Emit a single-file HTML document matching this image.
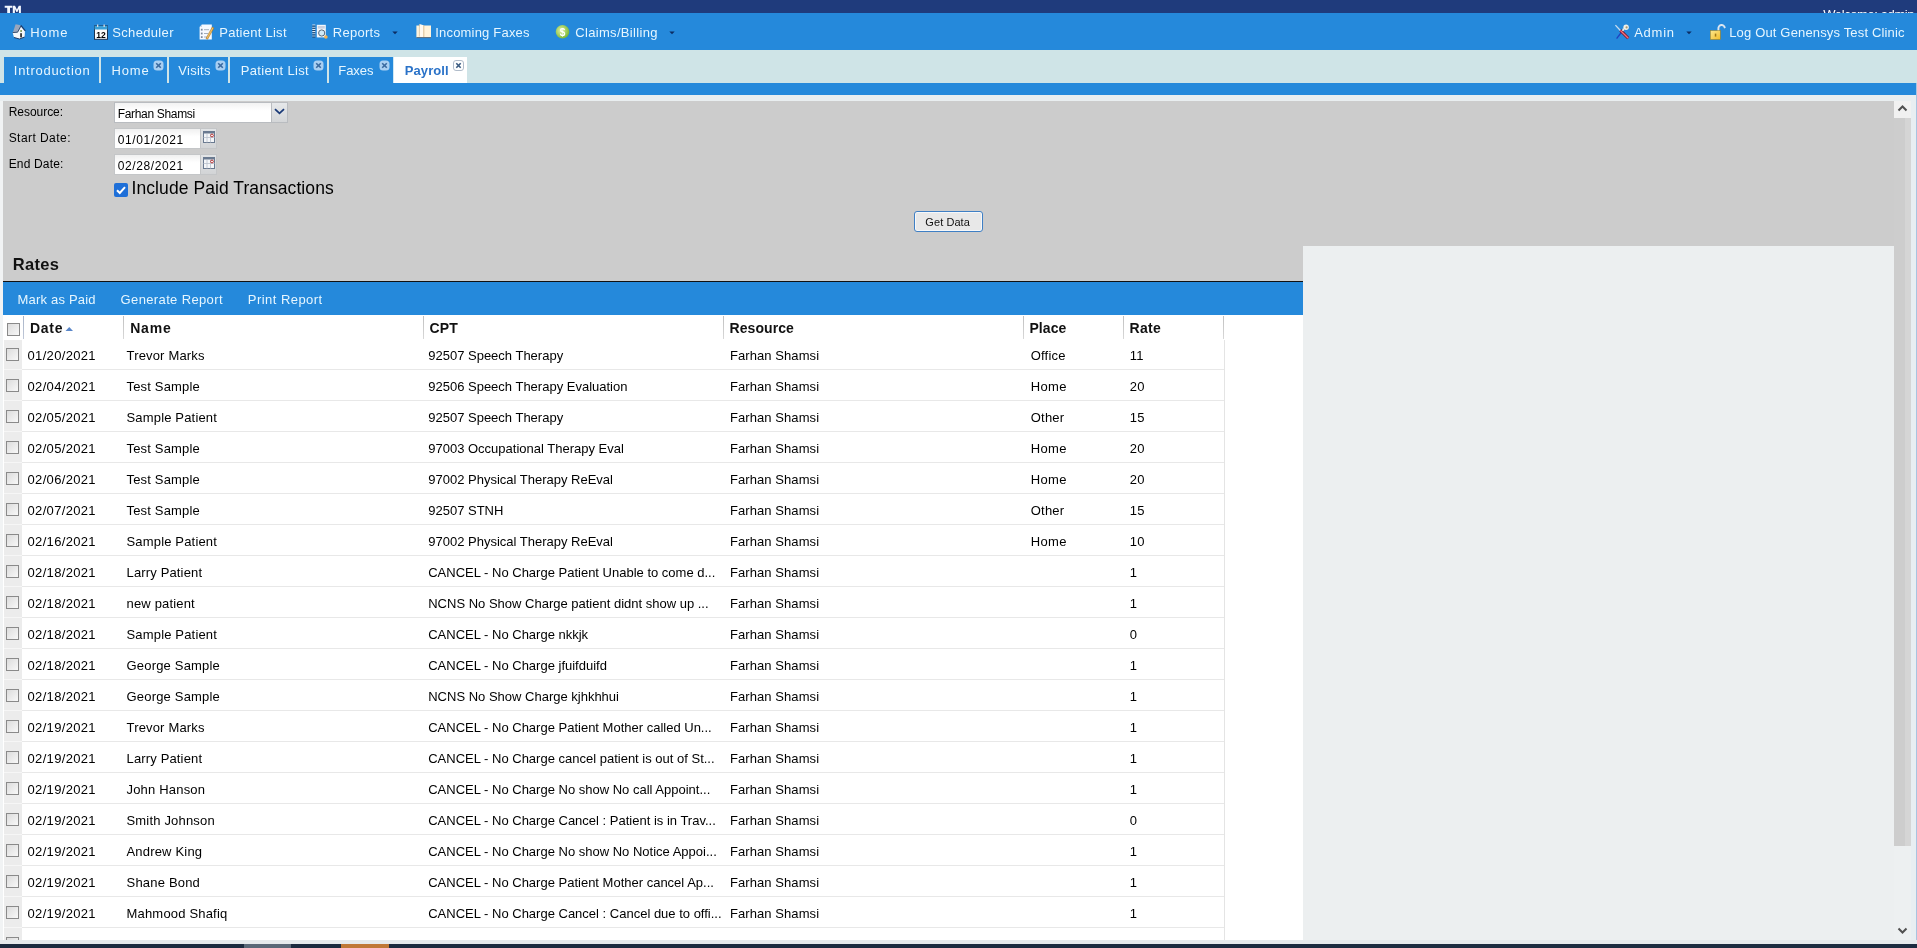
<!DOCTYPE html>
<html><head><meta charset="utf-8"><style>
html,body{margin:0;padding:0;width:1917px;height:948px;overflow:hidden;background:#eceff0;font-family:"Liberation Sans", sans-serif;}
.t{position:absolute;white-space:nowrap;}
.r{position:absolute;}
</style></head><body><div id="w" style="position:absolute;left:0;top:0;width:1917px;height:948px;will-change:transform;overflow:hidden">
<div class="r" style="left:0px;top:0px;width:1917px;height:13px;background:#1f3b7c"></div>
<svg class="r" style="left:0;top:0" width="24" height="13"><path d="M4.7 5.7 H12.3 V7.8 H10 V13 H7.2 V7.8 H4.7Z M12.8 5.7 H15 L16.9 9.5 L18.8 5.7 H20.9 V13 H18.9 V9 L17.4 12 H16.4 L14.9 9 V13 H12.8Z" fill="#f4f8ff"/></svg>
<div class="t" style="left:1823.22px;top:7.50px;font-size:13px;line-height:13px;font-weight:400;color:#fff;letter-spacing:-0.406px;">Welcome: admin</div>
<div class="r" style="left:0px;top:13px;width:1917px;height:37px;background:#2589db"></div>
<div class="r" style="left:0px;top:50px;width:1917px;height:33px;background:#cfe4e7"></div>
<div class="r" style="left:0px;top:83px;width:1917px;height:12px;background:#2589db"></div>
<div class="r" style="left:0px;top:95px;width:1917px;height:6px;background:#e9eef0"></div>
<div class="r" style="left:0px;top:101px;width:1917px;height:842px;background:#eceff0"></div>
<div class="r" style="left:0px;top:101px;width:3px;height:842px;background:#f1f3f4"></div>
<div class="r" style="left:3px;top:101px;width:1891px;height:145px;background:#cccccc"></div>
<div class="r" style="left:3px;top:246px;width:1300px;height:35px;background:#cccccc"></div>
<div class="r" style="left:3px;top:281px;width:1300px;height:1px;background:#111"></div>
<div class="r" style="left:3px;top:282px;width:1300px;height:33px;background:#2589db"></div>
<div class="r" style="left:3px;top:315px;width:1300px;height:625px;background:#fff"></div>
<div class="t" style="left:30.22px;top:26.00px;font-size:13px;line-height:13px;font-weight:400;color:#e6f6ff;letter-spacing:0.871px;">Home</div>
<div class="t" style="left:112.22px;top:26.00px;font-size:13px;line-height:13px;font-weight:400;color:#e6f6ff;letter-spacing:0.344px;">Scheduler</div>
<div class="t" style="left:219.22px;top:26.00px;font-size:13px;line-height:13px;font-weight:400;color:#e6f6ff;letter-spacing:0.270px;">Patient List</div>
<div class="t" style="left:332.72px;top:26.00px;font-size:13px;line-height:13px;font-weight:400;color:#e6f6ff;letter-spacing:0.295px;">Reports</div>
<div class="t" style="left:435.22px;top:26.00px;font-size:13px;line-height:13px;font-weight:400;color:#e6f6ff;letter-spacing:0.195px;">Incoming Faxes</div>
<div class="t" style="left:575.22px;top:26.00px;font-size:13px;line-height:13px;font-weight:400;color:#e6f6ff;letter-spacing:0.328px;">Claims/Billing</div>
<div class="t" style="left:1634.22px;top:26.00px;font-size:13px;line-height:13px;font-weight:400;color:#e6f6ff;letter-spacing:0.735px;">Admin</div>
<div class="t" style="left:1729.22px;top:26.00px;font-size:13px;line-height:13px;font-weight:400;color:#e6f6ff;letter-spacing:0.159px;">Log Out Genensys Test Clinic</div>
<svg class="r" style="left:390.7px;top:29.5px" width="8" height="6"><path d="M1.3 1.5 L6.7 1.5 L4 4.3Z" fill="#0c2c62"/></svg>
<svg class="r" style="left:667.6px;top:29.5px" width="8" height="6"><path d="M1.3 1.5 L6.7 1.5 L4 4.3Z" fill="#0c2c62"/></svg>
<svg class="r" style="left:1684.7px;top:29.5px" width="8" height="6"><path d="M1.3 1.5 L6.7 1.5 L4 4.3Z" fill="#0c2c62"/></svg>
<svg class="r" style="left:0px;top:0px" width="40" height="45" viewBox="0 0 40 45"><path d="M15.6 24.3 L20.8 25.3 L17.6 32.4 L12.8 32.8Z" fill="#9aa6bc"/><path d="M12.6 32.6 L17.6 32.2 L21 26 L25 30.6 L24.6 37 L19.5 39 L14 37.5Z" fill="#f6f8fa"/><path d="M20.8 25.3 L25.3 30.8" stroke="#163a6e" stroke-width="1.3"/><path d="M12.6 32.6 L17.6 32.2 L21 26" stroke="#2a3f60" stroke-width="0.9" fill="none"/><path d="M14 37.5 L19.5 39 L24.6 37" stroke="#1d3a66" stroke-width="1" fill="none"/><rect x="20.2" y="33.2" width="1.7" height="4.2" fill="#2a2a2a"/><circle cx="21.1" cy="31" r="0.9" fill="#6e8a3a"/></svg>
<svg class="r" style="left:94px;top:24px" width="14" height="16" viewBox="0 0 14 16"><rect x="0.5" y="2" width="13" height="13.3" fill="#fafafa" stroke="#1b3350" stroke-width="1"/><rect x="0.5" y="2" width="13" height="3.5" fill="#3aa0d8"/><rect x="3" y="0.5" width="1.3" height="2.5" fill="#ddd"/><rect x="9.5" y="0.5" width="1.3" height="2.5" fill="#ddd"/><text x="7" y="13.6" font-family="Liberation Sans" font-weight="700" font-size="8.5" text-anchor="middle" fill="#000">12</text></svg>
<svg class="r" style="left:199px;top:24px" width="16" height="16" viewBox="0 0 16 16"><path d="M3 0.4 L12.8 0.4 L12.8 15.5 L0.6 15.5 L0.6 3Z" fill="#f6faff"/><path d="M0.6 3 L3 0.4 L3 3Z" fill="#c8d4e4"/><rect x="1.9" y="4.8" width="1.7" height="1.8" fill="#7a889c"/><rect x="1.9" y="8.6" width="1.7" height="1.8" fill="#7a889c"/><rect x="1.9" y="12.2" width="1.7" height="1.8" fill="#7a889c"/><path d="M5 5.7h5M5 9.5h4M5 13h3" stroke="#9aa6b6" stroke-width="0.9"/><path d="M13.3 3 L14.9 4 L8.6 15.2 L7 14.4Z" fill="#f2c060" stroke="#a8701c" stroke-width="0.6"/></svg>
<svg class="r" style="left:311px;top:24px" width="17" height="16" viewBox="0 0 17 16"><path d="M1.3 1h3M1.3 3.2h3M1.3 5.4h3M1.3 7.6h3M1.3 9.8h3M1.3 12h3" stroke="#dfe8f0" stroke-width="1.1"/><path d="M1.3 2.1h3M1.3 4.3h3M1.3 6.5h3M1.3 8.7h3M1.3 10.9h3M1.3 13.1h3" stroke="#1e3a60" stroke-width="0.9"/><rect x="5.8" y="0.8" width="9" height="12.6" fill="#f4f8fc"/><rect x="6.8" y="2" width="7" height="2.6" fill="#c8d0e0"/><circle cx="10.7" cy="9" r="3.1" fill="#cfeaf8" stroke="#5a6878" stroke-width="1"/><circle cx="14.9" cy="13" r="1.8" fill="#f6b450"/></svg>
<svg class="r" style="left:416px;top:24px" width="16" height="15" viewBox="0 0 16 15"><rect x="0.4" y="1.5" width="14.6" height="12" fill="#fff4dc"/><path d="M3.5 0 L7.6 1.2 L7.6 13.5 L3.5 12.5Z" fill="#fffaf0"/><path d="M7.8 1.2 V13.5" stroke="#d0b080" stroke-width="0.8"/><path d="M3.4 0.2 V12.5" stroke="#c8b088" stroke-width="0.6"/><path d="M0.4 13.6 H15" stroke="#5a6a7a" stroke-width="1"/></svg>
<svg class="r" style="left:555px;top:24px" width="15" height="15" viewBox="0 0 15 15"><defs><radialGradient id="g1" cx="0.4" cy="0.4" r="0.7"><stop offset="0" stop-color="#e4f4a0"/><stop offset="1" stop-color="#6aae2a"/></radialGradient></defs><circle cx="7.5" cy="7.8" r="6.8" fill="url(#g1)"/><text x="7.5" y="11.5" font-family="Liberation Sans" font-weight="700" font-size="10" text-anchor="middle" fill="#fff">$</text></svg>
<svg class="r" style="left:1608px;top:20px" width="26" height="22" viewBox="0 0 26 22"><path d="M15 10.2 L8.6 18.6" stroke="#2040c0" stroke-width="1.4"/><path d="M7.4 5.1 L12.6 10.7" stroke="#c8dcee" stroke-width="1.3"/><path d="M12.4 10.4 L20.3 18.2" stroke="#7a1020" stroke-width="3"/><path d="M12.4 10.4 L20.3 18.2" stroke="#f07080" stroke-width="1.4"/><circle cx="18.1" cy="7.2" r="2.7" fill="#f2f0e8"/><circle cx="18.6" cy="7.4" r="1.1" fill="#a89870"/><path d="M15.6 8.4 L14.8 11" stroke="#f2f0e8" stroke-width="1.6"/></svg>
<svg class="r" style="left:1704px;top:20px" width="26" height="22" viewBox="0 0 26 22"><path d="M14.4 11 V8.6 A3.2 3.2 0 0 1 20.8 7.8 L21 8.2" fill="none" stroke="#dde6f0" stroke-width="1.9"/><defs><linearGradient id="lg" x1="0" y1="0" x2="1" y2="1"><stop offset="0" stop-color="#fbe890"/><stop offset="1" stop-color="#f2bc28"/></linearGradient></defs><rect x="6.3" y="10.6" width="10" height="8.9" fill="url(#lg)" stroke="#a07a10" stroke-width="0.5"/><rect x="10.8" y="13.6" width="1.5" height="3" fill="#a07818"/></svg>
<div class="r" style="left:4px;top:57px;width:95px;height:26px;background:#2589db"></div>
<div class="r" style="left:101px;top:57px;width:66px;height:26px;background:#2589db"></div>
<div class="r" style="left:169px;top:57px;width:59px;height:26px;background:#2589db"></div>
<div class="r" style="left:230px;top:57px;width:97px;height:26px;background:#2589db"></div>
<div class="r" style="left:329px;top:57px;width:64px;height:26px;background:#2589db"></div>
<div class="r" style="left:393px;top:57px;width:74px;height:26px;background:#fff;border-left:1px solid #cfe8f4;box-sizing:border-box"></div>
<div class="t" style="left:13.82px;top:64.00px;font-size:13px;line-height:13px;font-weight:400;color:#e6f6ff;letter-spacing:0.724px;">Introduction</div>
<div class="t" style="left:111.42px;top:64.00px;font-size:13px;line-height:13px;font-weight:400;color:#e6f6ff;letter-spacing:0.871px;">Home</div>
<div class="t" style="left:178.22px;top:64.00px;font-size:13px;line-height:13px;font-weight:400;color:#e6f6ff;letter-spacing:0.294px;">Visits</div>
<div class="t" style="left:240.82px;top:64.00px;font-size:13px;line-height:13px;font-weight:400;color:#e6f6ff;letter-spacing:0.316px;">Patient List</div>
<div class="t" style="left:338.22px;top:64.00px;font-size:13px;line-height:13px;font-weight:400;color:#e6f6ff;letter-spacing:-0.027px;">Faxes</div>
<div class="t" style="left:404.82px;top:64.00px;font-size:13px;line-height:13px;font-weight:700;color:#2a72c8;letter-spacing:0.073px;">Payroll</div>
<svg class="r" style="left:153px;top:60px" width="11" height="11" viewBox="0 0 11 11"><rect x="0.5" y="0.5" width="10" height="10" rx="3.5" fill="#a9cff2"/><path d="M3.2 3.2 L7.8 7.8 M7.8 3.2 L3.2 7.8" stroke="#3a6aa0" stroke-width="1.6"/></svg>
<svg class="r" style="left:215px;top:60px" width="11" height="11" viewBox="0 0 11 11"><rect x="0.5" y="0.5" width="10" height="10" rx="3.5" fill="#a9cff2"/><path d="M3.2 3.2 L7.8 7.8 M7.8 3.2 L3.2 7.8" stroke="#3a6aa0" stroke-width="1.6"/></svg>
<svg class="r" style="left:313px;top:60px" width="11" height="11" viewBox="0 0 11 11"><rect x="0.5" y="0.5" width="10" height="10" rx="3.5" fill="#a9cff2"/><path d="M3.2 3.2 L7.8 7.8 M7.8 3.2 L3.2 7.8" stroke="#3a6aa0" stroke-width="1.6"/></svg>
<svg class="r" style="left:379px;top:60px" width="11" height="11" viewBox="0 0 11 11"><rect x="0.5" y="0.5" width="10" height="10" rx="3.5" fill="#a9cff2"/><path d="M3.2 3.2 L7.8 7.8 M7.8 3.2 L3.2 7.8" stroke="#3a6aa0" stroke-width="1.6"/></svg>
<svg class="r" style="left:453px;top:60px" width="11" height="11" viewBox="0 0 11 11"><rect x="0.5" y="0.5" width="10" height="10" rx="2.5" fill="#fff" stroke="#a8b4c4" stroke-width="0.9"/><path d="M3.3 3.3 L7.7 7.7 M7.7 3.3 L3.3 7.7" stroke="#3a5a80" stroke-width="1.6"/></svg>
<div class="t" style="left:8.68px;top:105.84px;font-size:12px;line-height:12px;font-weight:400;color:#000;letter-spacing:-0.038px;">Resource:</div>
<div class="t" style="left:8.68px;top:131.84px;font-size:12px;line-height:12px;font-weight:400;color:#000;letter-spacing:0.444px;">Start Date:</div>
<div class="t" style="left:8.68px;top:157.84px;font-size:12px;line-height:12px;font-weight:400;color:#000;letter-spacing:0.166px;">End Date:</div>
<div class="r" style="left:114px;top:102px;width:174px;height:21px;background:#fff;border:1px solid #b9bcc0;box-sizing:border-box;background:linear-gradient(#f2f2f2,#fff 40%)"></div>
<div class="r" style="left:271px;top:102px;width:17px;height:21px;background:linear-gradient(#e6e8ea,#d4d6d8);border:1px solid #b9bcc0;box-sizing:border-box"></div>
<svg class="r" style="left:274px;top:108px" width="11" height="7"><path d="M1 1.2 L5.5 5.3 L10 1.2" stroke="#1a3a78" stroke-width="1.8" fill="none"/></svg>
<div class="t" style="left:117.68px;top:108.14px;font-size:12px;line-height:12px;font-weight:400;color:#000;letter-spacing:-0.323px;">Farhan Shamsi</div>
<div class="r" style="left:114px;top:128px;width:87px;height:21px;background:linear-gradient(#f0f0f0,#fff 40%);border:1px solid #c4c6c8;box-sizing:border-box"></div>
<div class="r" style="left:200px;top:128px;width:17px;height:21px;background:linear-gradient(#e2e4e6,#d2d4d6);border:1px solid #c4c6c8;box-sizing:border-box"></div>
<svg class="r" style="left:203px;top:131px" width="12" height="12" viewBox="0 0 12 12"><rect x="0.5" y="0.5" width="11" height="11" fill="#f4f6f8" stroke="#6a7a90" stroke-width="1"/><rect x="0.5" y="0.5" width="11" height="2" fill="#6a7a90"/><path d="M4 3v8.5M7.5 3v8.5M0.5 6.5h11" stroke="#b8c0cc" stroke-width="0.8"/><circle cx="9" cy="4.5" r="1.4" fill="#fff" stroke="#b02020" stroke-width="0.9"/></svg>
<div class="t" style="left:117.68px;top:133.84px;font-size:12px;line-height:12px;font-weight:400;color:#000;letter-spacing:0.615px;">01/01/2021</div>
<div class="r" style="left:114px;top:154px;width:87px;height:21px;background:linear-gradient(#f0f0f0,#fff 40%);border:1px solid #c4c6c8;box-sizing:border-box"></div>
<div class="r" style="left:200px;top:154px;width:17px;height:21px;background:linear-gradient(#e2e4e6,#d2d4d6);border:1px solid #c4c6c8;box-sizing:border-box"></div>
<svg class="r" style="left:203px;top:157px" width="12" height="12" viewBox="0 0 12 12"><rect x="0.5" y="0.5" width="11" height="11" fill="#f4f6f8" stroke="#6a7a90" stroke-width="1"/><rect x="0.5" y="0.5" width="11" height="2" fill="#6a7a90"/><path d="M4 3v8.5M7.5 3v8.5M0.5 6.5h11" stroke="#b8c0cc" stroke-width="0.8"/><circle cx="9" cy="4.5" r="1.4" fill="#fff" stroke="#b02020" stroke-width="0.9"/></svg>
<div class="t" style="left:117.68px;top:159.84px;font-size:12px;line-height:12px;font-weight:400;color:#000;letter-spacing:0.615px;">02/28/2021</div>
<div class="r" style="left:114px;top:183px;width:14px;height:14px;border-radius:2px;background:#1e6fd8"></div>
<svg class="r" style="left:114px;top:183px" width="14" height="14"><path d="M3 7.2 L5.8 10 L11 4.2" stroke="#fff" stroke-width="2" fill="none"/></svg>
<div class="t" style="left:131.55px;top:180.29px;font-size:17.5px;line-height:17.5px;font-weight:400;color:#000;letter-spacing:0.073px;">Include Paid Transactions</div>
<div class="r" style="left:914px;top:211px;width:69px;height:21px;background:#e8e8e8;border:1px solid #3f7fc4;border-radius:3px;box-sizing:border-box;box-shadow:inset 0 0 0 1px #f6f8fa"></div>
<div class="t" style="left:925.34px;top:216.89px;font-size:11px;line-height:11px;font-weight:400;color:#111;letter-spacing:0.067px;">Get Data</div>
<div class="t" style="left:12.81px;top:256.03px;font-size:16.5px;line-height:16.5px;font-weight:700;color:#111;letter-spacing:0.299px;">Rates</div>
<div class="t" style="left:17.52px;top:292.70px;font-size:13px;line-height:13px;font-weight:400;color:#e6f6ff;letter-spacing:0.193px;">Mark as Paid</div>
<div class="t" style="left:120.62px;top:292.70px;font-size:13px;line-height:13px;font-weight:400;color:#e6f6ff;letter-spacing:0.361px;">Generate Report</div>
<div class="t" style="left:247.82px;top:292.70px;font-size:13px;line-height:13px;font-weight:400;color:#e6f6ff;letter-spacing:0.457px;">Print Report</div>
<div class="r" style="left:3px;top:315px;width:1221px;height:25px;background:#fff"></div>
<div class="r" style="left:23px;top:316px;width:1px;height:23px;background:linear-gradient(#a8b4c8,#c0c8d8)"></div>
<div class="r" style="left:123px;top:316px;width:1px;height:23px;background:linear-gradient(#c0c0c0,#d8d8d8)"></div>
<div class="r" style="left:423px;top:316px;width:1px;height:23px;background:linear-gradient(#c0c0c0,#d8d8d8)"></div>
<div class="r" style="left:723px;top:316px;width:1px;height:23px;background:linear-gradient(#c0c0c0,#d8d8d8)"></div>
<div class="r" style="left:1023px;top:316px;width:1px;height:23px;background:linear-gradient(#c0c0c0,#d8d8d8)"></div>
<div class="r" style="left:1123px;top:316px;width:1px;height:23px;background:linear-gradient(#c0c0c0,#d8d8d8)"></div>
<div class="r" style="left:1223px;top:316px;width:1px;height:23px;background:linear-gradient(#c0c0c0,#d8d8d8)"></div>
<div class="r" style="left:7px;top:323px;width:13px;height:13px;border:1px solid #8a8a8a;box-sizing:border-box;background:linear-gradient(135deg,#dcdcdc,#f8f8f8)"></div>
<div class="t" style="left:30.06px;top:320.95px;font-size:14px;line-height:14px;font-weight:700;color:#111;letter-spacing:0.714px;">Date</div>
<div class="t" style="left:130.16px;top:320.95px;font-size:14px;line-height:14px;font-weight:700;color:#111;letter-spacing:0.853px;">Name</div>
<div class="t" style="left:429.46px;top:320.95px;font-size:14px;line-height:14px;font-weight:700;color:#111;letter-spacing:0.200px;">CPT</div>
<div class="t" style="left:729.46px;top:320.95px;font-size:14px;line-height:14px;font-weight:700;color:#111;letter-spacing:0.084px;">Resource</div>
<div class="t" style="left:1029.46px;top:320.95px;font-size:14px;line-height:14px;font-weight:700;color:#111;letter-spacing:0.077px;">Place</div>
<div class="t" style="left:1129.46px;top:320.95px;font-size:14px;line-height:14px;font-weight:700;color:#111;letter-spacing:0.347px;">Rate</div>
<svg class="r" style="left:65px;top:326px" width="9" height="6"><path d="M0.5 5 L4.25 1 L8 5Z" fill="#5a86c8"/></svg>
<div class="r" style="left:4px;top:340px;width:18px;height:600px;background:#ececec"></div>
<div class="r" style="left:4px;top:369px;width:18px;height:1px;background:#f6f6f6"></div>
<div class="r" style="left:6px;top:348px;width:13px;height:13px;border:1px solid #8a8a8a;box-sizing:border-box;background:linear-gradient(135deg,#dcdcdc,#f8f8f8)"></div>
<div class="t" style="left:27.52px;top:348.60px;font-size:13px;line-height:13px;font-weight:400;color:#000;letter-spacing:0.336px;">01/20/2021</div>
<div class="t" style="left:126.52px;top:348.60px;font-size:13px;line-height:13px;font-weight:400;color:#000;letter-spacing:0.170px;">Trevor Marks</div>
<div class="t" style="left:428.22px;top:348.60px;font-size:13px;line-height:13px;font-weight:400;color:#000;">92507 Speech Therapy</div>
<div class="t" style="left:730.02px;top:348.60px;font-size:13px;line-height:13px;font-weight:400;color:#000;letter-spacing:0.072px;">Farhan Shamsi</div>
<div class="t" style="left:1030.72px;top:348.60px;font-size:13px;line-height:13px;font-weight:400;color:#000;letter-spacing:0.195px;">Office</div>
<div class="t" style="left:1129.72px;top:348.60px;font-size:13px;line-height:13px;font-weight:400;color:#000;letter-spacing:0.366px;">11</div>
<div class="r" style="left:22px;top:369px;width:1202px;height:1px;background:#e8e8e8"></div>
<div class="r" style="left:4px;top:400px;width:18px;height:1px;background:#f6f6f6"></div>
<div class="r" style="left:6px;top:379px;width:13px;height:13px;border:1px solid #8a8a8a;box-sizing:border-box;background:linear-gradient(135deg,#dcdcdc,#f8f8f8)"></div>
<div class="t" style="left:27.52px;top:379.60px;font-size:13px;line-height:13px;font-weight:400;color:#000;letter-spacing:0.336px;">02/04/2021</div>
<div class="t" style="left:126.52px;top:379.60px;font-size:13px;line-height:13px;font-weight:400;color:#000;letter-spacing:0.176px;">Test Sample</div>
<div class="t" style="left:428.22px;top:379.60px;font-size:13px;line-height:13px;font-weight:400;color:#000;">92506 Speech Therapy Evaluation</div>
<div class="t" style="left:730.02px;top:379.60px;font-size:13px;line-height:13px;font-weight:400;color:#000;letter-spacing:0.072px;">Farhan Shamsi</div>
<div class="t" style="left:1030.72px;top:379.60px;font-size:13px;line-height:13px;font-weight:400;color:#000;letter-spacing:0.334px;">Home</div>
<div class="t" style="left:1129.72px;top:379.60px;font-size:13px;line-height:13px;font-weight:400;color:#000;letter-spacing:0.395px;">20</div>
<div class="r" style="left:22px;top:400px;width:1202px;height:1px;background:#e8e8e8"></div>
<div class="r" style="left:4px;top:431px;width:18px;height:1px;background:#f6f6f6"></div>
<div class="r" style="left:6px;top:410px;width:13px;height:13px;border:1px solid #8a8a8a;box-sizing:border-box;background:linear-gradient(135deg,#dcdcdc,#f8f8f8)"></div>
<div class="t" style="left:27.52px;top:410.60px;font-size:13px;line-height:13px;font-weight:400;color:#000;letter-spacing:0.336px;">02/05/2021</div>
<div class="t" style="left:126.52px;top:410.60px;font-size:13px;line-height:13px;font-weight:400;color:#000;letter-spacing:0.167px;">Sample Patient</div>
<div class="t" style="left:428.22px;top:410.60px;font-size:13px;line-height:13px;font-weight:400;color:#000;">92507 Speech Therapy</div>
<div class="t" style="left:730.02px;top:410.60px;font-size:13px;line-height:13px;font-weight:400;color:#000;letter-spacing:0.072px;">Farhan Shamsi</div>
<div class="t" style="left:1030.72px;top:410.60px;font-size:13px;line-height:13px;font-weight:400;color:#000;letter-spacing:0.234px;">Other</div>
<div class="t" style="left:1129.72px;top:410.60px;font-size:13px;line-height:13px;font-weight:400;color:#000;letter-spacing:0.395px;">15</div>
<div class="r" style="left:22px;top:431px;width:1202px;height:1px;background:#e8e8e8"></div>
<div class="r" style="left:4px;top:462px;width:18px;height:1px;background:#f6f6f6"></div>
<div class="r" style="left:6px;top:441px;width:13px;height:13px;border:1px solid #8a8a8a;box-sizing:border-box;background:linear-gradient(135deg,#dcdcdc,#f8f8f8)"></div>
<div class="t" style="left:27.52px;top:441.60px;font-size:13px;line-height:13px;font-weight:400;color:#000;letter-spacing:0.336px;">02/05/2021</div>
<div class="t" style="left:126.52px;top:441.60px;font-size:13px;line-height:13px;font-weight:400;color:#000;letter-spacing:0.176px;">Test Sample</div>
<div class="t" style="left:428.22px;top:441.60px;font-size:13px;line-height:13px;font-weight:400;color:#000;">97003 Occupational Therapy Eval</div>
<div class="t" style="left:730.02px;top:441.60px;font-size:13px;line-height:13px;font-weight:400;color:#000;letter-spacing:0.072px;">Farhan Shamsi</div>
<div class="t" style="left:1030.72px;top:441.60px;font-size:13px;line-height:13px;font-weight:400;color:#000;letter-spacing:0.334px;">Home</div>
<div class="t" style="left:1129.72px;top:441.60px;font-size:13px;line-height:13px;font-weight:400;color:#000;letter-spacing:0.395px;">20</div>
<div class="r" style="left:22px;top:462px;width:1202px;height:1px;background:#e8e8e8"></div>
<div class="r" style="left:4px;top:493px;width:18px;height:1px;background:#f6f6f6"></div>
<div class="r" style="left:6px;top:472px;width:13px;height:13px;border:1px solid #8a8a8a;box-sizing:border-box;background:linear-gradient(135deg,#dcdcdc,#f8f8f8)"></div>
<div class="t" style="left:27.52px;top:472.60px;font-size:13px;line-height:13px;font-weight:400;color:#000;letter-spacing:0.336px;">02/06/2021</div>
<div class="t" style="left:126.52px;top:472.60px;font-size:13px;line-height:13px;font-weight:400;color:#000;letter-spacing:0.176px;">Test Sample</div>
<div class="t" style="left:428.22px;top:472.60px;font-size:13px;line-height:13px;font-weight:400;color:#000;">97002 Physical Therapy ReEval</div>
<div class="t" style="left:730.02px;top:472.60px;font-size:13px;line-height:13px;font-weight:400;color:#000;letter-spacing:0.072px;">Farhan Shamsi</div>
<div class="t" style="left:1030.72px;top:472.60px;font-size:13px;line-height:13px;font-weight:400;color:#000;letter-spacing:0.334px;">Home</div>
<div class="t" style="left:1129.72px;top:472.60px;font-size:13px;line-height:13px;font-weight:400;color:#000;letter-spacing:0.395px;">20</div>
<div class="r" style="left:22px;top:493px;width:1202px;height:1px;background:#e8e8e8"></div>
<div class="r" style="left:4px;top:524px;width:18px;height:1px;background:#f6f6f6"></div>
<div class="r" style="left:6px;top:503px;width:13px;height:13px;border:1px solid #8a8a8a;box-sizing:border-box;background:linear-gradient(135deg,#dcdcdc,#f8f8f8)"></div>
<div class="t" style="left:27.52px;top:503.60px;font-size:13px;line-height:13px;font-weight:400;color:#000;letter-spacing:0.336px;">02/07/2021</div>
<div class="t" style="left:126.52px;top:503.60px;font-size:13px;line-height:13px;font-weight:400;color:#000;letter-spacing:0.176px;">Test Sample</div>
<div class="t" style="left:428.22px;top:503.60px;font-size:13px;line-height:13px;font-weight:400;color:#000;">92507 STNH</div>
<div class="t" style="left:730.02px;top:503.60px;font-size:13px;line-height:13px;font-weight:400;color:#000;letter-spacing:0.072px;">Farhan Shamsi</div>
<div class="t" style="left:1030.72px;top:503.60px;font-size:13px;line-height:13px;font-weight:400;color:#000;letter-spacing:0.234px;">Other</div>
<div class="t" style="left:1129.72px;top:503.60px;font-size:13px;line-height:13px;font-weight:400;color:#000;letter-spacing:0.395px;">15</div>
<div class="r" style="left:22px;top:524px;width:1202px;height:1px;background:#e8e8e8"></div>
<div class="r" style="left:4px;top:555px;width:18px;height:1px;background:#f6f6f6"></div>
<div class="r" style="left:6px;top:534px;width:13px;height:13px;border:1px solid #8a8a8a;box-sizing:border-box;background:linear-gradient(135deg,#dcdcdc,#f8f8f8)"></div>
<div class="t" style="left:27.52px;top:534.60px;font-size:13px;line-height:13px;font-weight:400;color:#000;letter-spacing:0.336px;">02/16/2021</div>
<div class="t" style="left:126.52px;top:534.60px;font-size:13px;line-height:13px;font-weight:400;color:#000;letter-spacing:0.167px;">Sample Patient</div>
<div class="t" style="left:428.22px;top:534.60px;font-size:13px;line-height:13px;font-weight:400;color:#000;">97002 Physical Therapy ReEval</div>
<div class="t" style="left:730.02px;top:534.60px;font-size:13px;line-height:13px;font-weight:400;color:#000;letter-spacing:0.072px;">Farhan Shamsi</div>
<div class="t" style="left:1030.72px;top:534.60px;font-size:13px;line-height:13px;font-weight:400;color:#000;letter-spacing:0.334px;">Home</div>
<div class="t" style="left:1129.72px;top:534.60px;font-size:13px;line-height:13px;font-weight:400;color:#000;letter-spacing:0.395px;">10</div>
<div class="r" style="left:22px;top:555px;width:1202px;height:1px;background:#e8e8e8"></div>
<div class="r" style="left:4px;top:586px;width:18px;height:1px;background:#f6f6f6"></div>
<div class="r" style="left:6px;top:565px;width:13px;height:13px;border:1px solid #8a8a8a;box-sizing:border-box;background:linear-gradient(135deg,#dcdcdc,#f8f8f8)"></div>
<div class="t" style="left:27.52px;top:565.60px;font-size:13px;line-height:13px;font-weight:400;color:#000;letter-spacing:0.336px;">02/18/2021</div>
<div class="t" style="left:126.52px;top:565.60px;font-size:13px;line-height:13px;font-weight:400;color:#000;letter-spacing:0.151px;">Larry Patient</div>
<div class="t" style="left:428.22px;top:565.60px;font-size:13px;line-height:13px;font-weight:400;color:#000;">CANCEL - No Charge Patient Unable to come d...</div>
<div class="t" style="left:730.02px;top:565.60px;font-size:13px;line-height:13px;font-weight:400;color:#000;letter-spacing:0.072px;">Farhan Shamsi</div>
<div class="t" style="left:1129.72px;top:565.60px;font-size:13px;line-height:13px;font-weight:400;color:#000;letter-spacing:0.178px;">1</div>
<div class="r" style="left:22px;top:586px;width:1202px;height:1px;background:#e8e8e8"></div>
<div class="r" style="left:4px;top:617px;width:18px;height:1px;background:#f6f6f6"></div>
<div class="r" style="left:6px;top:596px;width:13px;height:13px;border:1px solid #8a8a8a;box-sizing:border-box;background:linear-gradient(135deg,#dcdcdc,#f8f8f8)"></div>
<div class="t" style="left:27.52px;top:596.60px;font-size:13px;line-height:13px;font-weight:400;color:#000;letter-spacing:0.336px;">02/18/2021</div>
<div class="t" style="left:126.52px;top:596.60px;font-size:13px;line-height:13px;font-weight:400;color:#000;letter-spacing:0.163px;">new patient</div>
<div class="t" style="left:428.22px;top:596.60px;font-size:13px;line-height:13px;font-weight:400;color:#000;">NCNS No Show Charge patient didnt show up ...</div>
<div class="t" style="left:730.02px;top:596.60px;font-size:13px;line-height:13px;font-weight:400;color:#000;letter-spacing:0.072px;">Farhan Shamsi</div>
<div class="t" style="left:1129.72px;top:596.60px;font-size:13px;line-height:13px;font-weight:400;color:#000;letter-spacing:0.178px;">1</div>
<div class="r" style="left:22px;top:617px;width:1202px;height:1px;background:#e8e8e8"></div>
<div class="r" style="left:4px;top:648px;width:18px;height:1px;background:#f6f6f6"></div>
<div class="r" style="left:6px;top:627px;width:13px;height:13px;border:1px solid #8a8a8a;box-sizing:border-box;background:linear-gradient(135deg,#dcdcdc,#f8f8f8)"></div>
<div class="t" style="left:27.52px;top:627.60px;font-size:13px;line-height:13px;font-weight:400;color:#000;letter-spacing:0.336px;">02/18/2021</div>
<div class="t" style="left:126.52px;top:627.60px;font-size:13px;line-height:13px;font-weight:400;color:#000;letter-spacing:0.167px;">Sample Patient</div>
<div class="t" style="left:428.22px;top:627.60px;font-size:13px;line-height:13px;font-weight:400;color:#000;">CANCEL - No Charge nkkjk</div>
<div class="t" style="left:730.02px;top:627.60px;font-size:13px;line-height:13px;font-weight:400;color:#000;letter-spacing:0.072px;">Farhan Shamsi</div>
<div class="t" style="left:1129.72px;top:627.60px;font-size:13px;line-height:13px;font-weight:400;color:#000;letter-spacing:0.178px;">0</div>
<div class="r" style="left:22px;top:648px;width:1202px;height:1px;background:#e8e8e8"></div>
<div class="r" style="left:4px;top:679px;width:18px;height:1px;background:#f6f6f6"></div>
<div class="r" style="left:6px;top:658px;width:13px;height:13px;border:1px solid #8a8a8a;box-sizing:border-box;background:linear-gradient(135deg,#dcdcdc,#f8f8f8)"></div>
<div class="t" style="left:27.52px;top:658.60px;font-size:13px;line-height:13px;font-weight:400;color:#000;letter-spacing:0.336px;">02/18/2021</div>
<div class="t" style="left:126.52px;top:658.60px;font-size:13px;line-height:13px;font-weight:400;color:#000;letter-spacing:0.187px;">George Sample</div>
<div class="t" style="left:428.22px;top:658.60px;font-size:13px;line-height:13px;font-weight:400;color:#000;">CANCEL - No Charge jfuifduifd</div>
<div class="t" style="left:730.02px;top:658.60px;font-size:13px;line-height:13px;font-weight:400;color:#000;letter-spacing:0.072px;">Farhan Shamsi</div>
<div class="t" style="left:1129.72px;top:658.60px;font-size:13px;line-height:13px;font-weight:400;color:#000;letter-spacing:0.178px;">1</div>
<div class="r" style="left:22px;top:679px;width:1202px;height:1px;background:#e8e8e8"></div>
<div class="r" style="left:4px;top:710px;width:18px;height:1px;background:#f6f6f6"></div>
<div class="r" style="left:6px;top:689px;width:13px;height:13px;border:1px solid #8a8a8a;box-sizing:border-box;background:linear-gradient(135deg,#dcdcdc,#f8f8f8)"></div>
<div class="t" style="left:27.52px;top:689.60px;font-size:13px;line-height:13px;font-weight:400;color:#000;letter-spacing:0.336px;">02/18/2021</div>
<div class="t" style="left:126.52px;top:689.60px;font-size:13px;line-height:13px;font-weight:400;color:#000;letter-spacing:0.187px;">George Sample</div>
<div class="t" style="left:428.22px;top:689.60px;font-size:13px;line-height:13px;font-weight:400;color:#000;">NCNS No Show Charge kjhkhhui</div>
<div class="t" style="left:730.02px;top:689.60px;font-size:13px;line-height:13px;font-weight:400;color:#000;letter-spacing:0.072px;">Farhan Shamsi</div>
<div class="t" style="left:1129.72px;top:689.60px;font-size:13px;line-height:13px;font-weight:400;color:#000;letter-spacing:0.178px;">1</div>
<div class="r" style="left:22px;top:710px;width:1202px;height:1px;background:#e8e8e8"></div>
<div class="r" style="left:4px;top:741px;width:18px;height:1px;background:#f6f6f6"></div>
<div class="r" style="left:6px;top:720px;width:13px;height:13px;border:1px solid #8a8a8a;box-sizing:border-box;background:linear-gradient(135deg,#dcdcdc,#f8f8f8)"></div>
<div class="t" style="left:27.52px;top:720.60px;font-size:13px;line-height:13px;font-weight:400;color:#000;letter-spacing:0.336px;">02/19/2021</div>
<div class="t" style="left:126.52px;top:720.60px;font-size:13px;line-height:13px;font-weight:400;color:#000;letter-spacing:0.170px;">Trevor Marks</div>
<div class="t" style="left:428.22px;top:720.60px;font-size:13px;line-height:13px;font-weight:400;color:#000;">CANCEL - No Charge Patient Mother called Un...</div>
<div class="t" style="left:730.02px;top:720.60px;font-size:13px;line-height:13px;font-weight:400;color:#000;letter-spacing:0.072px;">Farhan Shamsi</div>
<div class="t" style="left:1129.72px;top:720.60px;font-size:13px;line-height:13px;font-weight:400;color:#000;letter-spacing:0.178px;">1</div>
<div class="r" style="left:22px;top:741px;width:1202px;height:1px;background:#e8e8e8"></div>
<div class="r" style="left:4px;top:772px;width:18px;height:1px;background:#f6f6f6"></div>
<div class="r" style="left:6px;top:751px;width:13px;height:13px;border:1px solid #8a8a8a;box-sizing:border-box;background:linear-gradient(135deg,#dcdcdc,#f8f8f8)"></div>
<div class="t" style="left:27.52px;top:751.60px;font-size:13px;line-height:13px;font-weight:400;color:#000;letter-spacing:0.336px;">02/19/2021</div>
<div class="t" style="left:126.52px;top:751.60px;font-size:13px;line-height:13px;font-weight:400;color:#000;letter-spacing:0.151px;">Larry Patient</div>
<div class="t" style="left:428.22px;top:751.60px;font-size:13px;line-height:13px;font-weight:400;color:#000;">CANCEL - No Charge cancel patient is out of St...</div>
<div class="t" style="left:730.02px;top:751.60px;font-size:13px;line-height:13px;font-weight:400;color:#000;letter-spacing:0.072px;">Farhan Shamsi</div>
<div class="t" style="left:1129.72px;top:751.60px;font-size:13px;line-height:13px;font-weight:400;color:#000;letter-spacing:0.178px;">1</div>
<div class="r" style="left:22px;top:772px;width:1202px;height:1px;background:#e8e8e8"></div>
<div class="r" style="left:4px;top:803px;width:18px;height:1px;background:#f6f6f6"></div>
<div class="r" style="left:6px;top:782px;width:13px;height:13px;border:1px solid #8a8a8a;box-sizing:border-box;background:linear-gradient(135deg,#dcdcdc,#f8f8f8)"></div>
<div class="t" style="left:27.52px;top:782.60px;font-size:13px;line-height:13px;font-weight:400;color:#000;letter-spacing:0.336px;">02/19/2021</div>
<div class="t" style="left:126.52px;top:782.60px;font-size:13px;line-height:13px;font-weight:400;color:#000;letter-spacing:0.188px;">John Hanson</div>
<div class="t" style="left:428.22px;top:782.60px;font-size:13px;line-height:13px;font-weight:400;color:#000;">CANCEL - No Charge No show No call Appoint...</div>
<div class="t" style="left:730.02px;top:782.60px;font-size:13px;line-height:13px;font-weight:400;color:#000;letter-spacing:0.072px;">Farhan Shamsi</div>
<div class="t" style="left:1129.72px;top:782.60px;font-size:13px;line-height:13px;font-weight:400;color:#000;letter-spacing:0.178px;">1</div>
<div class="r" style="left:22px;top:803px;width:1202px;height:1px;background:#e8e8e8"></div>
<div class="r" style="left:4px;top:834px;width:18px;height:1px;background:#f6f6f6"></div>
<div class="r" style="left:6px;top:813px;width:13px;height:13px;border:1px solid #8a8a8a;box-sizing:border-box;background:linear-gradient(135deg,#dcdcdc,#f8f8f8)"></div>
<div class="t" style="left:27.52px;top:813.60px;font-size:13px;line-height:13px;font-weight:400;color:#000;letter-spacing:0.336px;">02/19/2021</div>
<div class="t" style="left:126.52px;top:813.60px;font-size:13px;line-height:13px;font-weight:400;color:#000;letter-spacing:0.176px;">Smith Johnson</div>
<div class="t" style="left:428.22px;top:813.60px;font-size:13px;line-height:13px;font-weight:400;color:#000;">CANCEL - No Charge Cancel : Patient is in Trav...</div>
<div class="t" style="left:730.02px;top:813.60px;font-size:13px;line-height:13px;font-weight:400;color:#000;letter-spacing:0.072px;">Farhan Shamsi</div>
<div class="t" style="left:1129.72px;top:813.60px;font-size:13px;line-height:13px;font-weight:400;color:#000;letter-spacing:0.178px;">0</div>
<div class="r" style="left:22px;top:834px;width:1202px;height:1px;background:#e8e8e8"></div>
<div class="r" style="left:4px;top:865px;width:18px;height:1px;background:#f6f6f6"></div>
<div class="r" style="left:6px;top:844px;width:13px;height:13px;border:1px solid #8a8a8a;box-sizing:border-box;background:linear-gradient(135deg,#dcdcdc,#f8f8f8)"></div>
<div class="t" style="left:27.52px;top:844.60px;font-size:13px;line-height:13px;font-weight:400;color:#000;letter-spacing:0.336px;">02/19/2021</div>
<div class="t" style="left:126.52px;top:844.60px;font-size:13px;line-height:13px;font-weight:400;color:#000;letter-spacing:0.181px;">Andrew King</div>
<div class="t" style="left:428.22px;top:844.60px;font-size:13px;line-height:13px;font-weight:400;color:#000;">CANCEL - No Charge No show No Notice Appoi...</div>
<div class="t" style="left:730.02px;top:844.60px;font-size:13px;line-height:13px;font-weight:400;color:#000;letter-spacing:0.072px;">Farhan Shamsi</div>
<div class="t" style="left:1129.72px;top:844.60px;font-size:13px;line-height:13px;font-weight:400;color:#000;letter-spacing:0.178px;">1</div>
<div class="r" style="left:22px;top:865px;width:1202px;height:1px;background:#e8e8e8"></div>
<div class="r" style="left:4px;top:896px;width:18px;height:1px;background:#f6f6f6"></div>
<div class="r" style="left:6px;top:875px;width:13px;height:13px;border:1px solid #8a8a8a;box-sizing:border-box;background:linear-gradient(135deg,#dcdcdc,#f8f8f8)"></div>
<div class="t" style="left:27.52px;top:875.60px;font-size:13px;line-height:13px;font-weight:400;color:#000;letter-spacing:0.336px;">02/19/2021</div>
<div class="t" style="left:126.52px;top:875.60px;font-size:13px;line-height:13px;font-weight:400;color:#000;letter-spacing:0.195px;">Shane Bond</div>
<div class="t" style="left:428.22px;top:875.60px;font-size:13px;line-height:13px;font-weight:400;color:#000;">CANCEL - No Charge Patient Mother cancel Ap...</div>
<div class="t" style="left:730.02px;top:875.60px;font-size:13px;line-height:13px;font-weight:400;color:#000;letter-spacing:0.072px;">Farhan Shamsi</div>
<div class="t" style="left:1129.72px;top:875.60px;font-size:13px;line-height:13px;font-weight:400;color:#000;letter-spacing:0.178px;">1</div>
<div class="r" style="left:22px;top:896px;width:1202px;height:1px;background:#e8e8e8"></div>
<div class="r" style="left:4px;top:927px;width:18px;height:1px;background:#f6f6f6"></div>
<div class="r" style="left:6px;top:906px;width:13px;height:13px;border:1px solid #8a8a8a;box-sizing:border-box;background:linear-gradient(135deg,#dcdcdc,#f8f8f8)"></div>
<div class="t" style="left:27.52px;top:906.60px;font-size:13px;line-height:13px;font-weight:400;color:#000;letter-spacing:0.336px;">02/19/2021</div>
<div class="t" style="left:126.52px;top:906.60px;font-size:13px;line-height:13px;font-weight:400;color:#000;letter-spacing:0.187px;">Mahmood Shafiq</div>
<div class="t" style="left:428.22px;top:906.60px;font-size:13px;line-height:13px;font-weight:400;color:#000;">CANCEL - No Charge Cancel : Cancel due to offi...</div>
<div class="t" style="left:730.02px;top:906.60px;font-size:13px;line-height:13px;font-weight:400;color:#000;letter-spacing:0.072px;">Farhan Shamsi</div>
<div class="t" style="left:1129.72px;top:906.60px;font-size:13px;line-height:13px;font-weight:400;color:#000;letter-spacing:0.178px;">1</div>
<div class="r" style="left:22px;top:927px;width:1202px;height:1px;background:#e8e8e8"></div>
<div class="r" style="left:4px;top:958px;width:18px;height:1px;background:#f6f6f6"></div>
<div class="r" style="left:6px;top:937px;width:13px;height:13px;border:1px solid #8a8a8a;box-sizing:border-box;background:linear-gradient(135deg,#dcdcdc,#f8f8f8)"></div>
<div class="r" style="left:1224px;top:340px;width:1px;height:600px;background:#e4e4e4"></div>
<div class="r" style="left:1894px;top:101px;width:17px;height:842px;background:#edf0f1"></div>
<div class="r" style="left:1894px;top:101px;width:17px;height:17px;background:#f1f1f1"></div>
<div class="r" style="left:1894px;top:118px;width:11px;height:728px;background:#cdcdcd"></div>
<div class="r" style="left:1905px;top:118px;width:6px;height:728px;background:#d5d5d5"></div>
<svg class="r" style="left:1897px;top:104px" width="11" height="8"><path d="M1.5 6.5 L5.5 2.5 L9.5 6.5" stroke="#505050" stroke-width="2" fill="none"/></svg>
<svg class="r" style="left:1897px;top:927px" width="11" height="8"><path d="M1.5 1.5 L5.5 5.5 L9.5 1.5" stroke="#505050" stroke-width="2" fill="none"/></svg>
<div class="r" style="left:1911px;top:95px;width:6px;height:848px;background:#e8eef2"></div>
<div class="r" style="left:1916px;top:83px;width:1px;height:860px;background:#a8c4e0"></div>
<div class="r" style="left:0px;top:940px;width:1917px;height:4px;background:#e6eaed"></div>
<div class="r" style="left:0px;top:944px;width:1917px;height:4px;background:#1c2b40"></div>
<div class="r" style="left:244px;top:944px;width:47px;height:4px;background:#5a6878"></div>
<div class="r" style="left:341px;top:944px;width:48px;height:4px;background:#c07838"></div>
</div></body></html>
